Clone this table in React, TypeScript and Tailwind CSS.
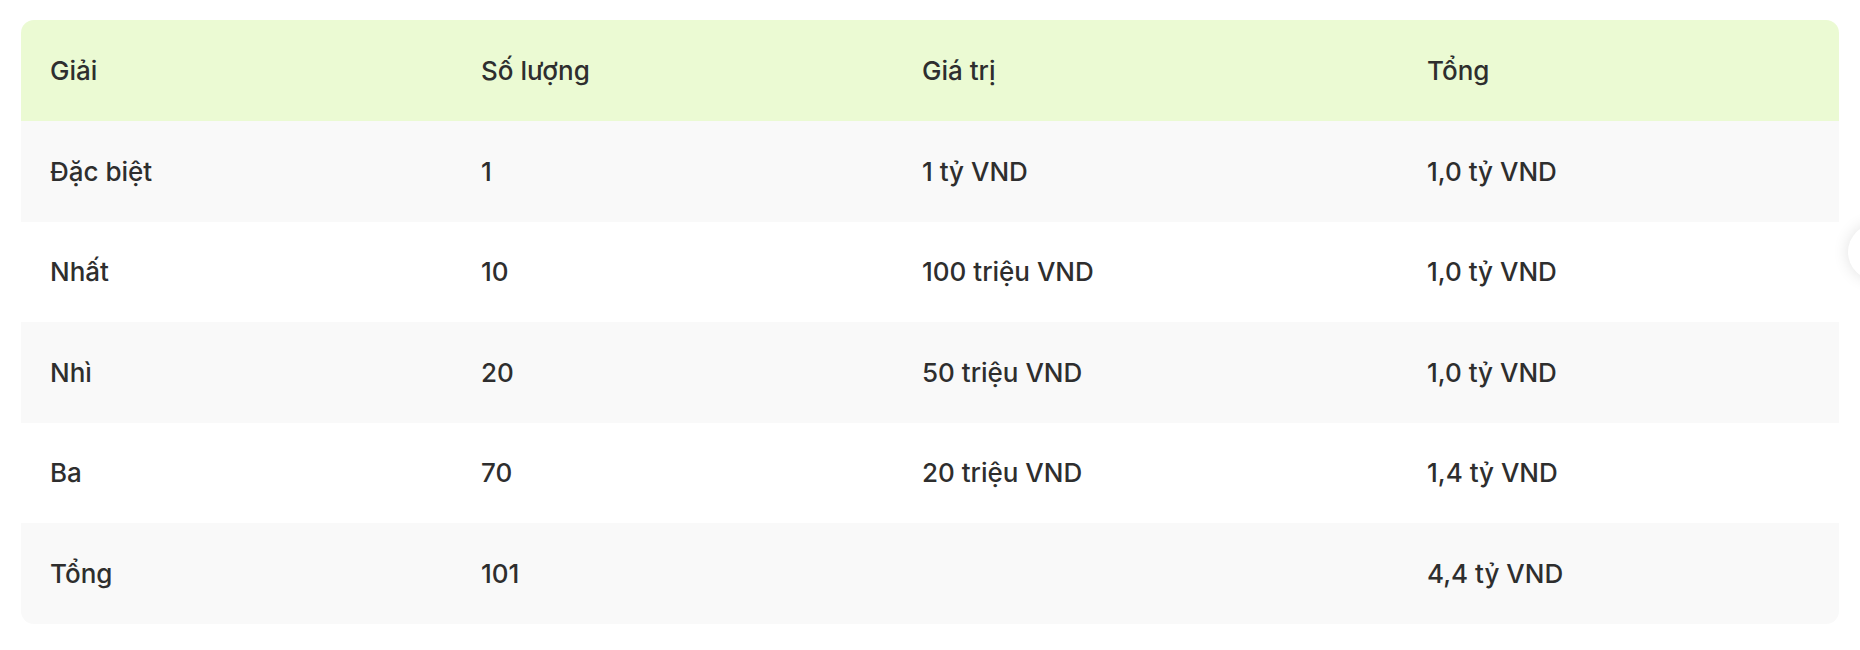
import { ChevronLeft } from 'lucide-react';

const rows = [
  { prize: 'Đặc biệt', qty: '1', value: '1 tỷ VND', total: '1,0 tỷ VND' },
  { prize: 'Nhất', qty: '10', value: '100 triệu VND', total: '1,0 tỷ VND' },
  { prize: 'Nhì', qty: '20', value: '50 triệu VND', total: '1,0 tỷ VND' },
  { prize: 'Ba', qty: '70', value: '20 triệu VND', total: '1,4 tỷ VND' },
  { prize: 'Tổng', qty: '101', value: '', total: '4,4 tỷ VND' },
];

const cols = 'grid grid-cols-[431px_441px_505px_441px]';

export default function App() {
  return (
    <div className="relative w-[1860px] h-[650px] bg-white overflow-hidden font-['Inter',sans-serif] text-[#2e2e2e]">
      <div className="pl-[21px] pt-[20px]">
        <div className="w-[1818px] rounded-[13px] overflow-hidden text-[26px] font-medium">
          {/* header */}
          <div className={`${cols} bg-[#ebfad3] h-[101px] items-center`}>
            <div className="pl-[29px]">Giải</div>
            <div className="pl-[29px]">Số lượng</div>
            <div className="pl-[29px]">Giá trị</div>
            <div className="pl-[29px]">Tổng</div>
          </div>
          {rows.map((r, i) => (
            <div
              key={r.prize}
              className={`${cols} h-[100.5px] items-center ${i % 2 === 0 ? 'bg-[#f9f9f9]' : 'bg-white'}`}
            >
              <div className="pl-[29px]">{r.prize}</div>
              <div className="pl-[29px]">{r.qty}</div>
              <div className="pl-[29px]">{r.value}</div>
              <div className="pl-[29px]">{r.total}</div>
            </div>
          ))}
        </div>
      </div>

      {/* floating button, mostly off screen */}
      <div className="absolute left-[1848px] top-[224px] w-[56px] h-[56px] rounded-full bg-white shadow-[0_0_16px_rgba(0,0,0,0.12)] flex items-center justify-center">
        <ChevronLeft className="w-5 h-5 text-[#2f8ce8] -ml-[18px]" strokeWidth={2.5} />
      </div>
    </div>
  );
}
